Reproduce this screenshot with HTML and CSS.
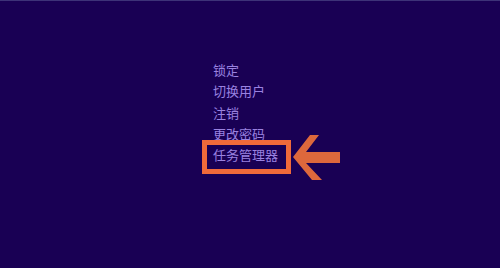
FILE: index.html
```html
<!DOCTYPE html>
<html>
<head>
<meta charset="utf-8">
<link rel="stylesheet" href="styles.css">
</head>
<body>
<div class="screen">
  <ul class="menu">
    <li>锁定</li>
    <li>切换用户</li>
    <li>注销</li>
    <li>更改密码</li>
    <li class="target">任务管理器</li>
  </ul>
  <div class="highlight"></div>
  <svg class="arrow" width="60" height="60" viewBox="0 0 60 60">
    <polygon points="3,27 20,5 29,5 16,22 50,22 50,33 16,33 32,50 22,50" fill="#dd683c"/>
  </svg>
</div>
</body>
</html>
```
FILE: styles.css
```css
html, body {
  margin: 0;
  padding: 0;
}
body {
  background: #190054;
  font-family: "Noto Sans CJK SC", "Noto Sans", sans-serif;
}
.screen {
  position: relative;
  width: 500px;
  height: 268px;
  background: #190054;
  border-top: 1px solid #3d3278;
  box-sizing: border-box;
  overflow: hidden;
}
.menu {
  list-style: none;
  margin: 0;
  padding: 58px 0 0 213px;
  display: flex;
  flex-direction: column;
}
.menu li {
  color: #9a82e0;
  font-size: 13px;
  line-height: 21.3px;
  height: 21.3px;
}
.highlight {
  position: absolute;
  left: 202px;
  top: 139px;
  width: 89px;
  height: 34px;
  border: 5px solid #f06a3a;
  box-sizing: border-box;
}
.arrow {
  position: absolute;
  left: 290px;
  top: 129px;
}
```
